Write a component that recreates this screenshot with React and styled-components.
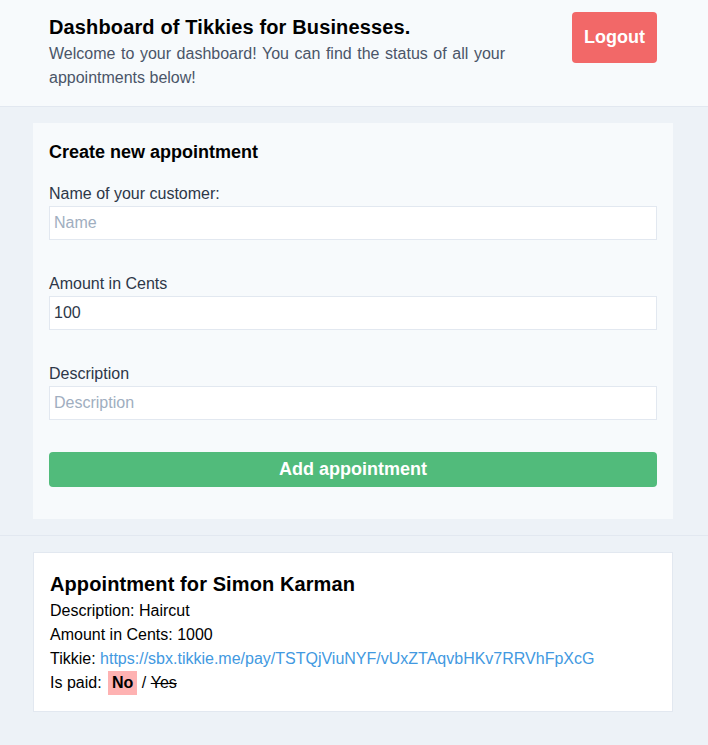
import React from 'react'
import styled, { createGlobalStyle } from 'styled-components'

const GlobalStyle = createGlobalStyle`
    html, body {
        margin: 0;
        padding: 0;
        background: #edf2f7;
        font-family: "Liberation Sans", Arial, sans-serif;
        color: #000;
    }
    * {
        box-sizing: border-box;
    }
`

const App = () => {
    return (
        <>
            <GlobalStyle />
            <Header>
                <Container>
                    <HeaderRow>
                        <HeaderText>
                            <PageTitle>Dashboard of Tikkies for Businesses.</PageTitle>
                            <Subtitle>
                                Welcome to your dashboard! You can find the status of all your appointments below!
                            </Subtitle>
                        </HeaderText>
                        <LogoutButton>Logout</LogoutButton>
                    </HeaderRow>
                </Container>
            </Header>
            <Section $bordered>
                <Container>
                    <FormCard>
                        <CardTitle>Create new appointment</CardTitle>
                        <Field>
                            <Label>Name of your customer:</Label>
                            <Input placeholder="Name" />
                        </Field>
                        <Field>
                            <Label>Amount in Cents</Label>
                            <Input defaultValue="100" />
                        </Field>
                        <Field>
                            <Label>Description</Label>
                            <Input placeholder="Description" />
                        </Field>
                        <AddButton>Add appointment</AddButton>
                    </FormCard>
                </Container>
            </Section>
            <Section>
                <Container>
                    <AppointmentCard>
                        <AppointmentTitle>Appointment for Simon Karman</AppointmentTitle>
                        <Line>Description: Haircut</Line>
                        <Line>Amount in Cents: 1000</Line>
                        <Line>
                            Tikkie: <Link href="#">https://sbx.tikkie.me/pay/TSTQjViuNYF/vUxZTAqvbHKv7RRVhFpXcG</Link>
                        </Line>
                        <Line>
                            Is paid: <Status $active>No</Status> / <Status>Yes</Status>
                        </Line>
                    </AppointmentCard>
                </Container>
            </Section>
        </>
    )
}

export default App

const Container = styled.div`
    max-width: 642px;
    margin: 0 auto;
    padding-right: 2px;
`

const Header = styled.header`
    background: #f7fafc;
    border-bottom: 1px solid #e2e8f0;
    padding: 12px 0 16px;
`

const HeaderRow = styled.div`
    display: flex;
    align-items: flex-start;
    justify-content: space-between;
    padding: 0 16px;
`

const HeaderText = styled.div`
    width: 456px;
    padding-top: 1px;
`

const PageTitle = styled.h1`
    margin: 0;
    font-size: 20px;
    line-height: 28px;
    font-weight: 700;
    letter-spacing: 0.14px;
    color: #000;
`

const Subtitle = styled.p`
    margin: 1px 0 0;
    font-size: 16px;
    line-height: 24px;
    color: #4a5568;
    text-align: justify;
`

const LogoutButton = styled.button`
    flex-shrink: 0;
    width: 85px;
    height: 51px;
    border: 0;
    border-radius: 4px;
    background: #f26868;
    color: #fff;
    font-family: inherit;
    font-size: 18px;
    font-weight: 700;
    cursor: pointer;
`

const Section = styled.section`
    padding: 16px 0;
    border-bottom: ${p => (p.$bordered ? '1px solid #e2e8f0' : '0')};
`

const FormCard = styled.div`
    background: #f7fafc;
    padding: 16px 16px 32px;
`

const CardTitle = styled.h2`
    margin: -1px 0 16px;
    font-size: 18px;
    line-height: 28px;
    font-weight: 700;
`

const Field = styled.div`
    display: flex;
    flex-direction: column;
    margin-bottom: 32px;
`

const Label = styled.label`
    font-size: 16px;
    line-height: 24px;
    color: #2d3748;
`

const Input = styled.input`
    width: 100%;
    height: 34px;
    padding: 4px;
    border: 1px solid #e2e8f0;
    background: #fff;
    font-family: inherit;
    font-size: 16px;
    color: #2d3748;
    outline: none;
    &::placeholder {
        color: #a0aec0;
    }
`

const AddButton = styled.button`
    display: block;
    width: 100%;
    height: 35px;
    border: 0;
    border-radius: 4px;
    background: #51bb7b;
    color: #fff;
    font-family: inherit;
    font-size: 18px;
    font-weight: 700;
    cursor: pointer;
`

const AppointmentCard = styled.div`
    background: #fff;
    border: 1px solid #e2e8f0;
    padding: 17px 16px 16px;
`

const AppointmentTitle = styled.h3`
    margin: 0 0 1px;
    font-size: 20px;
    line-height: 28px;
    font-weight: 700;
    letter-spacing: 0.1px;
`

const Line = styled.div`
    font-size: 16px;
    line-height: 24px;
`

const Link = styled.a`
    color: #4299e1;
    text-decoration: none;
`

const Status = styled.span`
    display: inline-block;
    margin-left: ${p => (p.$active ? '2px' : '0')};
    padding: ${p => (p.$active ? '0 4px' : '0')};
    font-weight: ${p => (p.$active ? 700 : 400)};
    background: ${p => (p.$active ? '#feb2b2' : 'transparent')};
    text-decoration: ${p => (p.$active ? 'none' : 'line-through')};
`
